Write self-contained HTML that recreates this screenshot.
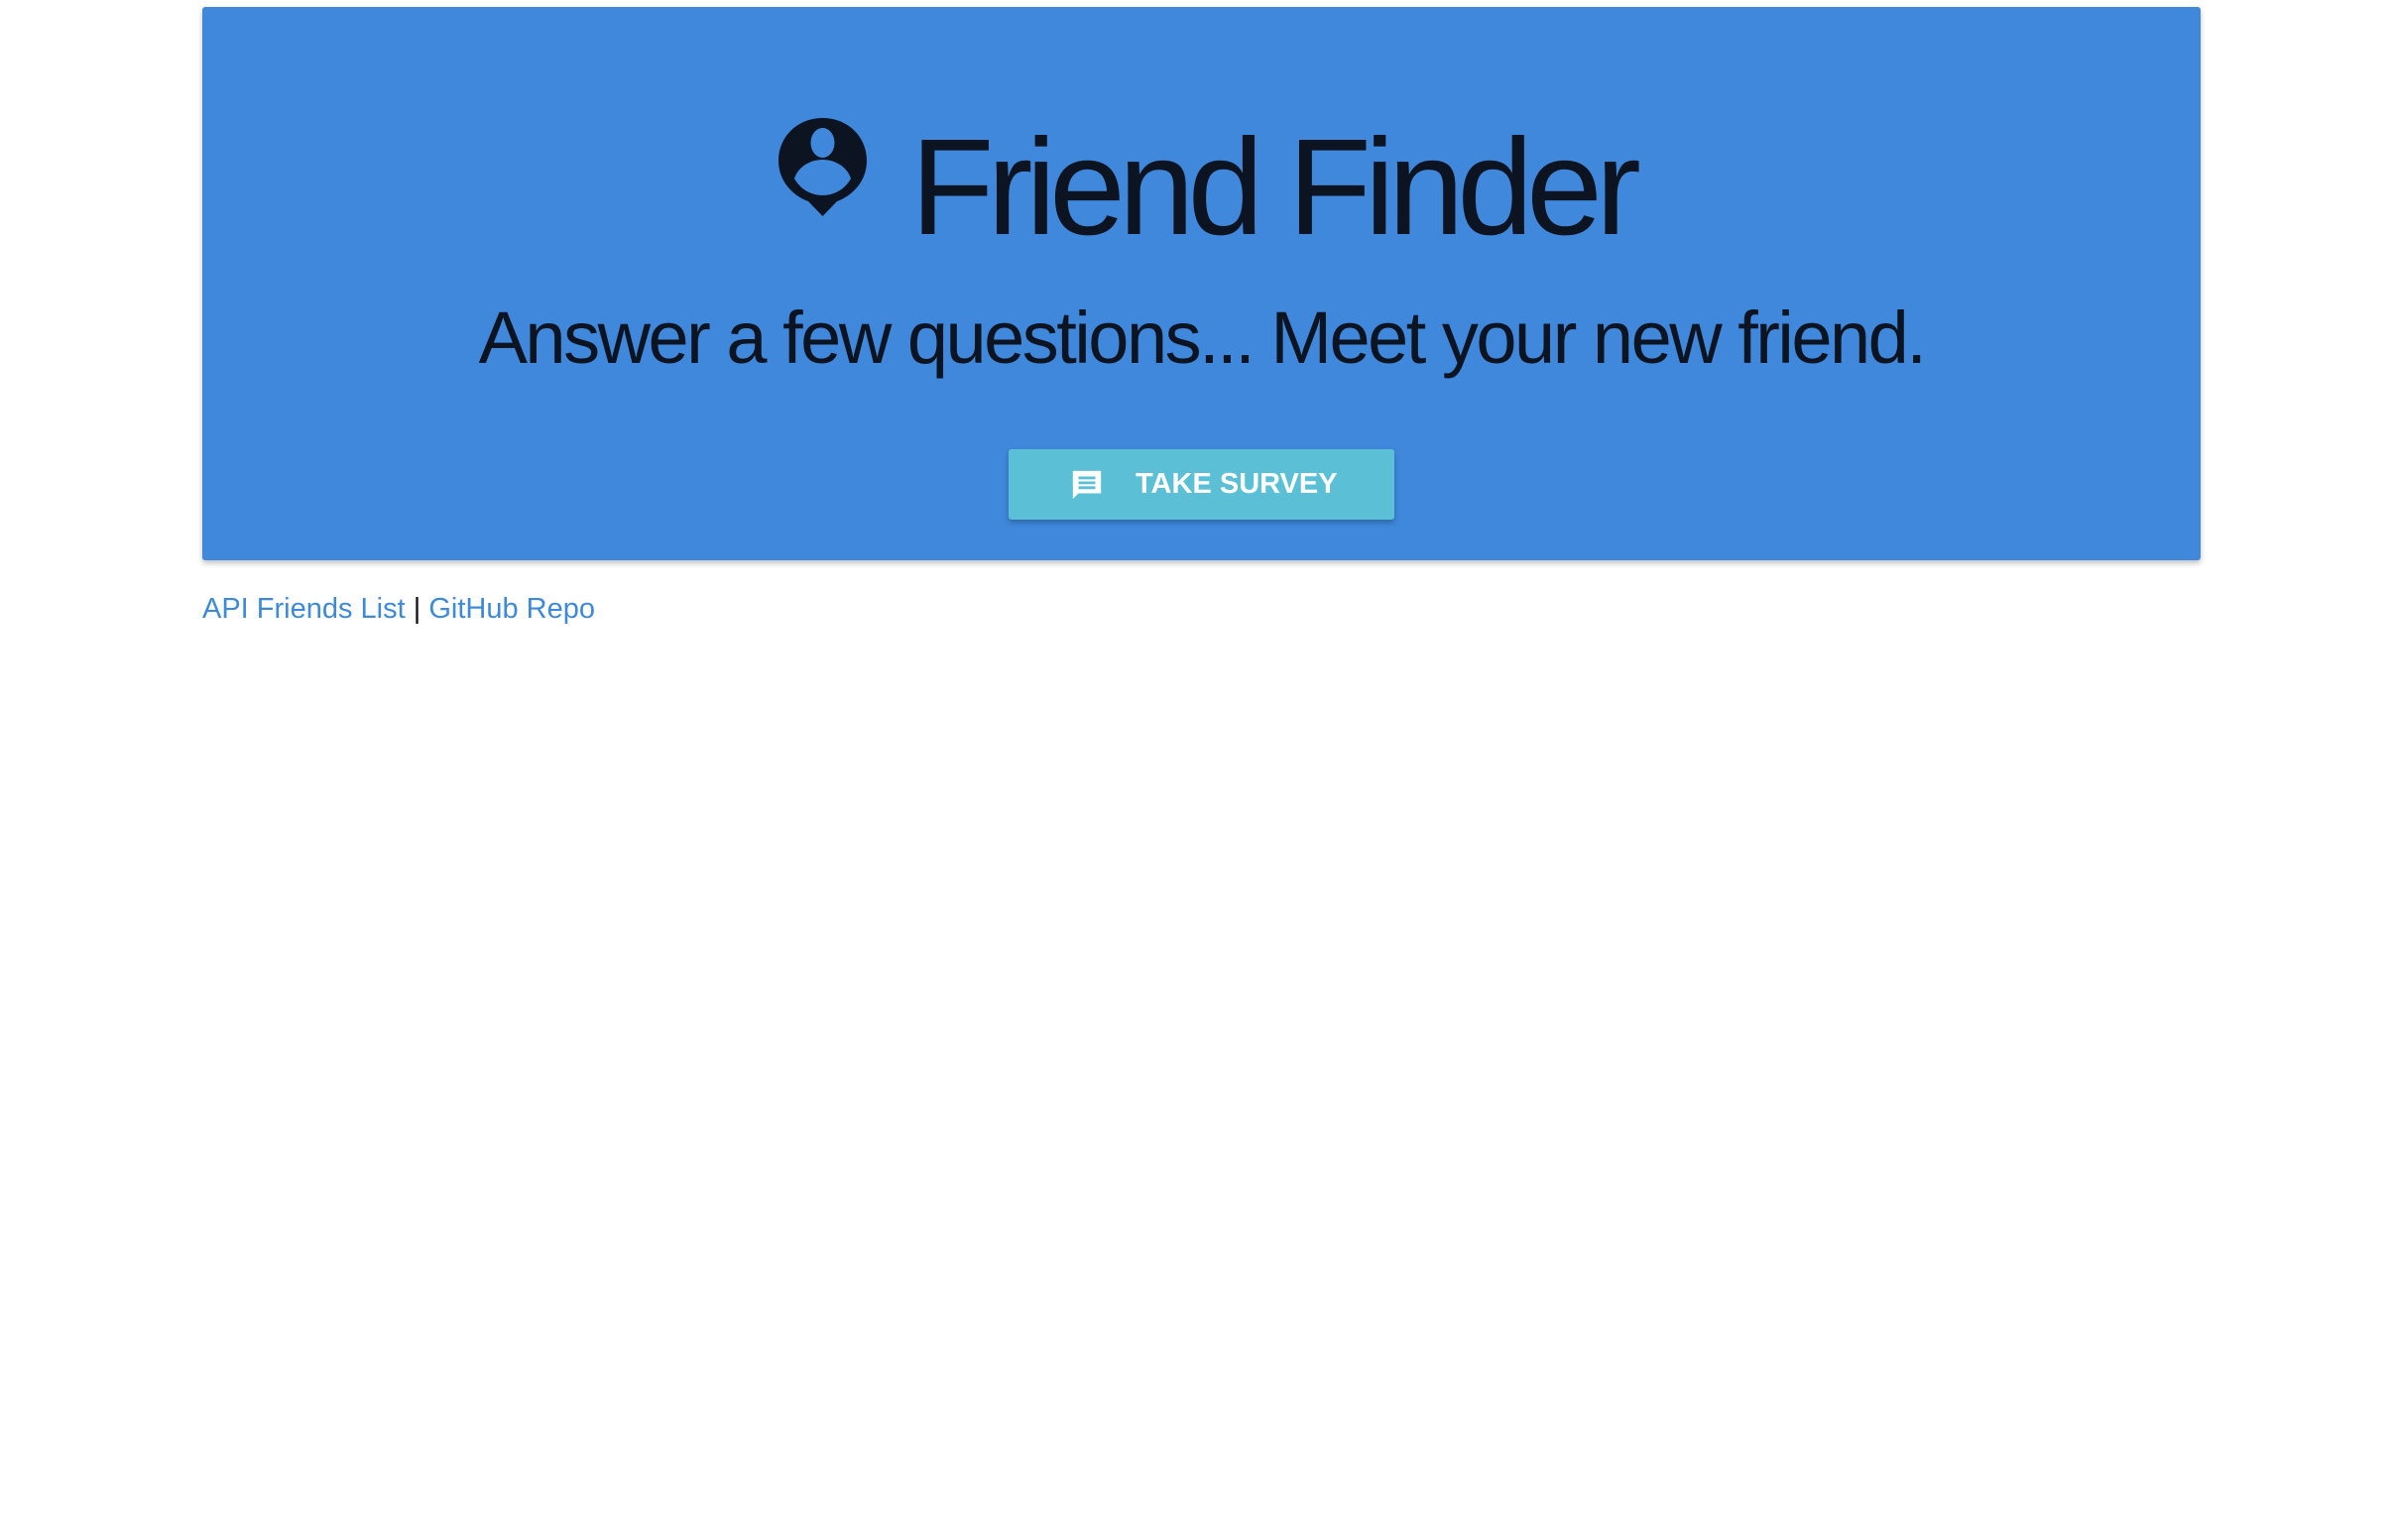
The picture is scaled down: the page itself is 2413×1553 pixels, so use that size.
<!DOCTYPE html>
<html><head><meta charset="utf-8"><style>
html,body{margin:0;padding:0;background:#fff;width:2413px;height:1553px;overflow:hidden;font-family:"Liberation Sans",Arial,sans-serif}
.card{position:absolute;left:204px;top:7px;width:2015px;height:558px;background:#3f88dc;border-radius:3px;box-shadow:0 3px 6px rgba(0,0,0,.25)}
.title{position:absolute;left:4px;width:100%;top:107px;text-align:center;font-size:138px;line-height:150px;color:#0b1420;letter-spacing:-7px;white-space:nowrap}
.title svg{vertical-align:top;margin-right:42px;margin-top:3px}
.sub{position:absolute;left:0;width:100%;top:289px;text-align:center;font-size:74px;line-height:90px;color:#0b1420;letter-spacing:-2.5px;white-space:nowrap}
.btn{position:absolute;left:813px;top:446px;width:389px;height:71px;background:#5bc0d6;border-radius:3px;box-shadow:0 3px 6px rgba(0,0,0,.25);color:#fff;font-size:29px;line-height:71px;font-weight:bold}
.btn svg{position:absolute;left:62px;top:19px}
.btn span{position:absolute;left:128px;top:0;white-space:nowrap}
.links{position:absolute;left:204px;top:598px;font-size:29px;color:#111;white-space:nowrap}
.links a{color:#3f8ad8;text-decoration:none}
</style></head><body>
<div class="card">
<div class="title"><svg width="93" height="102" viewBox="0 0 93 102"><path d="M46.5 2C21 2 2 21 2 45c0 22 16 36 30 41l14.5 15 14.5-15C75 81 91 67 91 45 91 21 72 2 46.5 2z" fill="#0b1420"/><ellipse cx="46.5" cy="27" rx="12" ry="15" fill="#3f88dc"/><path d="M18 63c4-12 16-19 28.5-19S71 51 75 63c-6 11-17 17-28.5 17S24 74 18 63z" fill="#3f88dc"/></svg>Friend Finder</div>
<div class="sub">Answer a few questions... Meet your new friend.</div>
<div class="btn"><svg width="34" height="34" viewBox="0 0 24 24"><path d="M2 2h20v16H6l-4 4z" fill="#fff"/><path d="M6 6h12v2H6zm0 3.5h12v2H6zM6 13h12v2H6z" fill="#5bc0d6"/></svg><span>TAKE SURVEY</span></div>
</div>
<div class="links"><a>API Friends List</a> | <a>GitHub Repo</a></div>
</body></html>
